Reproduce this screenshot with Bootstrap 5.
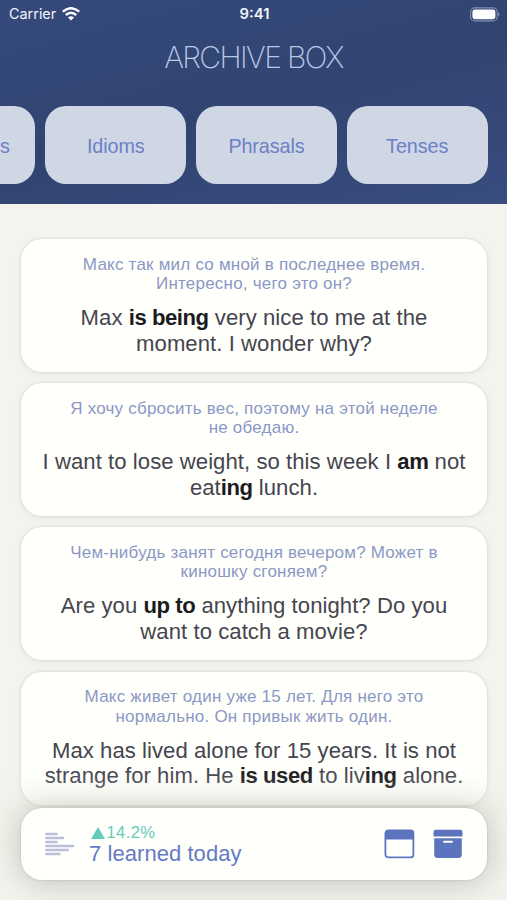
<!DOCTYPE html>
<html lang="en">
<head>
<meta charset="utf-8">
<meta name="viewport" content="width=device-width, initial-scale=1">
<title>Archive Box</title>
<link href="https://cdn.jsdelivr.net/npm/bootstrap@5.3.0/dist/css/bootstrap.min.css" rel="stylesheet">
<style>
body{width:507px;height:900px;overflow:hidden;background:#f4f3ee;font-family:"Liberation Sans",Arial,sans-serif;color:#45454f}
.top-panel{height:203.5px;background:linear-gradient(165deg,#354a7b 0%,#314471 50%,#384c7e 100%)}
.status{height:28px;padding:0 7px 0 9px;color:#f2f4fa;font-family:Inter,"Liberation Sans",sans-serif;font-size:14.4px}
.status>*{flex:1 1 0}
.clock{font-weight:600;font-size:14.8px}
.wifi{margin-left:6px}
.title{font-family:Inter,Lato,sans-serif;font-weight:200;font-size:30px;line-height:36px;letter-spacing:-1.6px;color:#b9c9e6;margin-top:11px}
.tabs{margin-top:31px;gap:10px;padding-right:19.5px}
.tab{flex:0 0 140.7px;width:140.7px;height:78px;border-radius:21px;background:#cfd7e5;color:#6b80c6;font-size:19.8px;padding-top:3px;letter-spacing:-.1px}
.deck{padding:35.5px 20px 0 21px;gap:11.2px}
.phrase{flex:0 0 133px;height:133px;border-radius:21px;background:#fffffb;box-shadow:0 0 3px rgba(70,70,60,.18),0 2px 8px rgba(70,70,60,.06);padding-top:15.8px}
.ru{font-size:17px;line-height:19.3px;letter-spacing:.22px;color:#8b98c5}
.en{font-size:22.1px;line-height:25.7px;letter-spacing:.06px;margin-top:11.7px}
.en b{color:#1b1b20;letter-spacing:-.45px}
.line{display:block;white-space:nowrap}
.dock{left:21px;top:808px;width:466px;height:72px;border-radius:21px;background:#fffffb;box-shadow:0 0 2px rgba(60,60,50,.25),0 2px 32px rgba(50,50,40,.27);padding:0 24px}
.fade-out{left:0;right:0;top:770px;height:130px;background:linear-gradient(rgba(244,244,239,0),rgba(240,240,232,.35) 30%,rgba(244,244,239,.5))}
.stats{margin-left:14px}
.growth{color:#64cbbb;font-size:16.5px;line-height:19px;letter-spacing:.4px;gap:2px;padding-left:1.5px}
.learned{color:#647ac4;font-size:22px;line-height:23px;letter-spacing:.06px}
.box-icon{margin-left:18px}
</style>
<script src="https://cdn.jsdelivr.net/npm/bootstrap@5.3.0/dist/js/bootstrap.bundle.min.js"></script>
</head>
<body class="position-relative">
<header class="top-panel">
  <div class="status d-flex align-items-center">
    <div class="d-flex align-items-center">Carrier
      <svg class="wifi" width="18" height="14" viewBox="0 0 18 14" fill="none" stroke="#fff" stroke-width="2.4"><path d="M.8 4.7Q9-2.3 17.2 4.7M3.8 8Q9 3.6 14.2 8"/><path d="M6 10.4Q9 8 12 10.4L9 13.6Z" fill="#fff" stroke="none"/></svg>
    </div>
    <div class="clock text-center">9:41</div>
    <div class="d-flex justify-content-end">
      <svg width="30" height="15" viewBox="0 0 30 15"><rect x=".6" y=".9" width="26.6" height="13" rx="4" fill="none" stroke="#8290b1" stroke-width="1.1"/><rect x="2.4" y="2.6" width="23" height="9.6" rx="2.4" fill="#fff"/><path d="M28.2 5.2Q31 7.4 28.2 9.6Z" fill="#8290b1"/></svg>
    </div>
  </div>
  <h1 class="title text-center mb-0">ARCHIVE BOX</h1>
  <nav class="tabs d-flex justify-content-end overflow-hidden">
    <div class="tab d-flex align-items-center justify-content-center">Adjectives</div>
    <div class="tab d-flex align-items-center justify-content-center">Idioms</div>
    <div class="tab d-flex align-items-center justify-content-center">Phrasals</div>
    <div class="tab d-flex align-items-center justify-content-center">Tenses</div>
  </nav>
</header>
<main class="deck d-flex flex-column text-center">
  <article class="phrase">
    <div class="ru"><span class="line">Макс так мил со мной в последнее время.</span><span class="line">Интересно, чего это он?</span></div>
    <div class="en"><span class="line">Max <b>is being</b> very nice to me at the</span><span class="line">moment. I wonder why?</span></div>
  </article>
  <article class="phrase">
    <div class="ru"><span class="line">Я хочу сбросить вес, поэтому на этой неделе</span><span class="line">не обедаю.</span></div>
    <div class="en"><span class="line">I want to lose weight, so this week I <b>am</b> not</span><span class="line">eat<b>ing</b> lunch.</span></div>
  </article>
  <article class="phrase">
    <div class="ru"><span class="line">Чем-нибудь занят сегодня вечером? Может в</span><span class="line">киношку сгоняем?</span></div>
    <div class="en"><span class="line">Are you <b>up to</b> anything tonight? Do you</span><span class="line">want to catch a movie?</span></div>
  </article>
  <article class="phrase">
    <div class="ru"><span class="line">Макс живет один уже 15 лет. Для него это</span><span class="line">нормально. Он привык жить один.</span></div>
    <div class="en"><span class="line">Max has lived alone for 15 years. It is not</span><span class="line">strange for him. He <b>is used</b> to liv<b>ing</b> alone.</span></div>
  </article>
</main>
<div class="fade-out position-absolute"></div>
<footer class="dock position-absolute d-flex align-items-center">
  <svg width="30" height="24" viewBox="0 0 30 24" fill="none" stroke="#b7bfda" stroke-width="2.6" stroke-linecap="round"><path d="M1.4 2H11.5M1.4 6H17.8M1.4 10H11.5M1.4 14H28M1.4 18H22.8M1.4 22H14.4"/></svg>
  <div class="stats">
    <div class="growth d-flex align-items-center"><svg width="14" height="12" viewBox="0 0 14 12"><path d="M7 0L14 12H0Z" fill="#64cbbb"/></svg>14.2%</div>
    <div class="learned">7 learned today</div>
  </div>
  <svg class="ms-auto" width="31" height="30" viewBox="0 0 31 30"><rect x="1.4" y="1.4" width="28" height="27" rx="3" fill="none" stroke="#6078c0" stroke-width="1.8"/><path d="M1 10.5V4Q1 1 4 1H27Q30 1 30 4V10.5Z" fill="#5b74bd"/></svg>
  <svg class="box-icon" width="30" height="30" viewBox="0 0 30 30" fill="#5b74bd"><path d="M.5 7.6V3.2Q.5.8 2.9.8H27.1Q29.5.8 29.5 3.2V7.6ZM1.2 9.2H28.8V25.5Q28.8 29 25.3 29H4.7Q1.2 29 1.2 25.5Z"/><path d="M11 12.7H19" stroke="#fffffb" stroke-width="1.9" stroke-linecap="round"/></svg>
</footer>
</body>
</html>
